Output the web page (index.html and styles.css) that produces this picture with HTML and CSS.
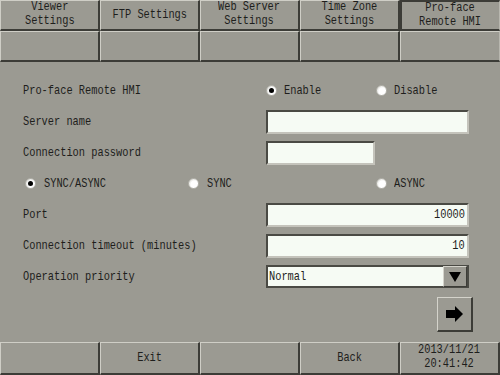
FILE: index.html
```html
<!DOCTYPE html>
<html>
<head>
<meta charset="utf-8">
<link rel="stylesheet" href="styles.css">
</head>
<body>
<div class="screen">
  <nav class="tabs">
    <div class="tab two"><span class="t c">Viewer<br>Settings</span></div>
    <div class="tab"><span class="t c">FTP Settings</span></div>
    <div class="tab two"><span class="t c">Web Server<br>Settings</span></div>
    <div class="tab two"><span class="t c">Time Zone<br>Settings</span></div>
    <div class="tab two active"><span class="t c">Pro-face<br>Remote HMI</span></div>
    <div class="tab"></div>
    <div class="tab"></div>
    <div class="tab"></div>
    <div class="tab"></div>
    <div class="tab sub-active"></div>
  </nav>

  <main class="form">
    <div class="row">
      <div class="label"><span class="t">Pro-face Remote HMI</span></div>
      <div class="radio w110"><i class="dot on"></i><span class="t">Enable</span></div>
      <div class="radio"><i class="dot"></i><span class="t">Disable</span></div>
    </div>
    <div class="row">
      <div class="label"><span class="t">Server name</span></div>
      <div class="field wide"></div>
    </div>
    <div class="row">
      <div class="label"><span class="t">Connection password</span></div>
      <div class="field short"></div>
    </div>
    <div class="row sync">
      <div class="radio w163"><i class="dot on"></i><span class="t">SYNC/ASYNC</span></div>
      <div class="radio w188"><i class="dot"></i><span class="t">SYNC</span></div>
      <div class="radio"><i class="dot"></i><span class="t">ASYNC</span></div>
    </div>
    <div class="row">
      <div class="label"><span class="t">Port</span></div>
      <div class="field wide num"><span class="t r">10000</span></div>
    </div>
    <div class="row">
      <div class="label"><span class="t">Connection timeout (minutes)</span></div>
      <div class="field wide num"><span class="t r">10</span></div>
    </div>
    <div class="row">
      <div class="label"><span class="t">Operation priority</span></div>
      <div class="field wide select">
        <span class="t">Normal</span>
        <div class="drop">
          <svg width="12" height="10" viewBox="0 0 12 10"><polygon points="0,0 12,0 6,10" fill="#000"/></svg>
        </div>
      </div>
    </div>
    <div class="next-row">
      <div class="next">
        <svg width="18" height="16" viewBox="0 0 18 16"><polygon points="0,4 9,4 9,0 17,8 9,16 9,12 0,12" fill="#000"/></svg>
      </div>
    </div>
  </main>

  <footer class="bar">
    <div class="cell"></div>
    <div class="cell"><span class="t c">Exit</span></div>
    <div class="cell"></div>
    <div class="cell"><span class="t c">Back</span></div>
    <div class="cell two"><span class="t c">2013/11/21<br>20:41:42</span></div>
  </footer>
</div>
</body>
</html>
```
FILE: styles.css
```css
body {
  margin: 0;
  background: #9b9a92;
}

.screen {
  width: 500px;
  height: 375px;
  display: flex;
  flex-direction: column;
  font-family: "Liberation Mono", monospace;
  font-size: 13px;
  color: #1e1e1c;
  overflow: hidden;
}

.t {
  display: inline-block;
  transform: scaleX(0.795);
  transform-origin: left center;
  white-space: nowrap;
}
.t.c { transform-origin: center center; }
.t.r { transform-origin: right center; }

/* tabs */
.tabs {
  display: grid;
  grid-template-columns: repeat(5, 100px);
  grid-template-rows: 31px 31px;
}
.tab, .cell {
  box-sizing: border-box;
  border-top: 1px solid #cfcec6;
  border-left: 1px solid #cfcec6;
  border-right: 2px solid #3c3c37;
  border-bottom: 2px solid #3c3c37;
  display: flex;
  align-items: center;
  justify-content: center;
  text-align: center;
  line-height: 14px;
}
.two {
  font-size: 12px;
  line-height: 13.6px;
}
.two .t { transform: scaleX(0.86); }
.tab.active {
  border-top: 2px solid #3c3c37;
  border-left: 2px solid #3c3c37;
  border-right: 1px solid #b8b7af;
}
.tab.sub-active {
  border-right: 1px solid #b8b7af;
}

/* form */
.form {
  flex: 1;
  padding: 13px 0 0 23px;
  display: flex;
  flex-direction: column;
}
.row {
  height: 31px;
  display: flex;
  align-items: center;
}
.label { width: 243px; }
.sync { padding-left: 2px; }

.radio {
  display: flex;
  align-items: center;
  gap: 7px;
}
.w110 { width: 110px; }
.w163 { width: 163px; gap: 8px; }
.w188 { width: 188px; gap: 8px; }

.dot {
  box-sizing: border-box;
  width: 11px;
  height: 11px;
  border-radius: 50%;
  background: radial-gradient(circle at 60% 60%, #ffffff 0, #ffffff 45%, #e6e6e2 70%, #8e8d87 100%);
  border: 1px solid #b4b3ac;
  display: flex;
  align-items: center;
  justify-content: center;
}
.dot.on::after {
  content: "";
  width: 5px;
  height: 5px;
  border-radius: 50%;
  background: #000;
}

.field {
  box-sizing: border-box;
  height: 24px;
  background: #f6fbf4;
  border: 2px solid;
  border-color: #4a4a44 #c4c3bb #c4c3bb #4a4a44;
  display: flex;
  align-items: center;
}
.wide { width: 203px; }
.short { width: 109px; }
.num {
  justify-content: flex-end;
  padding-right: 2px;
}
.select {
  height: 23px;
  padding-left: 1px;
  justify-content: space-between;
  border-right-color: #4a4a44;
  border-bottom-color: #4a4a44;
}
.drop {
  box-sizing: border-box;
  width: 24px;
  height: 21px;
  background: #9b9a92;
  border-top: 1px solid #d4d3cb;
  border-left: 1px solid #d4d3cb;
  border-right: 1px solid #3c3c37;
  border-bottom: 1px solid #3c3c37;
  display: flex;
  align-items: center;
  justify-content: center;
}

.next-row {
  display: flex;
  justify-content: flex-end;
  padding: 5px 27px 0 0;
}
.next {
  box-sizing: border-box;
  width: 36px;
  height: 35px;
  border-top: 1px solid #d4d3cb;
  border-left: 1px solid #d4d3cb;
  border-right: 2px solid #3c3c37;
  border-bottom: 2px solid #3c3c37;
  display: flex;
  align-items: center;
  justify-content: center;
}

/* footer */
.bar {
  display: grid;
  grid-template-columns: repeat(5, 100px);
  height: 33px;
}
```
